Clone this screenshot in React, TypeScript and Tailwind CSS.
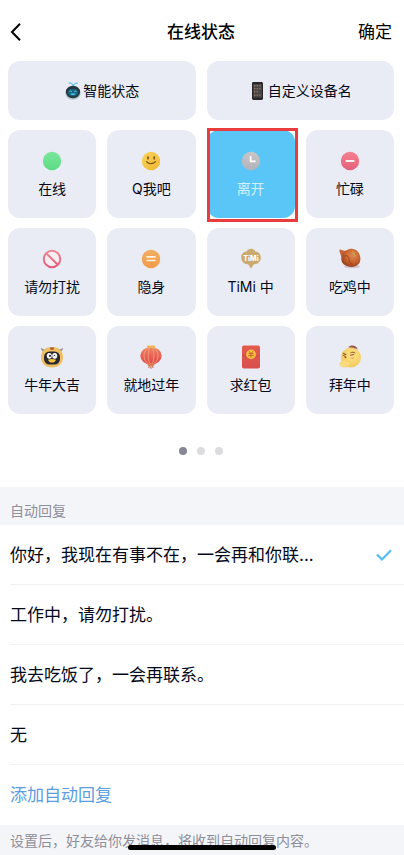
import { useState } from "react"
import type { ReactNode } from "react"

const OnlineIcon = () => (
  <svg width="24" height="24" viewBox="0 0 24 24" aria-hidden="true">
    <defs>
      <linearGradient id="online" x1="0" y1="0" x2="0" y2="1">
        <stop offset="0" stopColor="#7be69b" />
        <stop offset="1" stopColor="#5bdc84" />
      </linearGradient>
    </defs>
    <circle cx="12" cy="12" r="9.2" fill="url(#online)" />
  </svg>
)

const SmileIcon = () => (
  <svg width="24" height="24" viewBox="0 0 24 24" aria-hidden="true">
    <defs>
      <linearGradient id="smile" x1="0" y1="0" x2="1" y2="1">
        <stop offset="0" stopColor="#f9d45f" />
        <stop offset="1" stopColor="#f2b62f" />
      </linearGradient>
    </defs>
    <circle cx="12" cy="12" r="9.2" fill="url(#smile)" />
    <ellipse cx="9" cy="8.8" rx="0.9" ry="1.9" fill="#80571c" />
    <ellipse cx="15.2" cy="8.8" rx="0.9" ry="1.9" fill="#80571c" />
    <path d="M7.6 12.6c1.800 2.700 6.800 2.700 8.800 0" fill="none" stroke="#80571c" strokeWidth="1.200" strokeLinecap="round" />
  </svg>
)

const ClockIcon = () => (
  <svg width="24" height="24" viewBox="0 0 24 24" aria-hidden="true">
    <defs>
      <linearGradient id="clock" x1="0" y1="0" x2="0" y2="1">
        <stop offset="0" stopColor="#c9c5c6" />
        <stop offset="1" stopColor="#b1b3bb" />
      </linearGradient>
    </defs>
    <circle cx="12" cy="12" r="9.2" fill="url(#clock)" />
    <path d="M11.6 7v5.3h5" fill="none" stroke="#fff" strokeWidth="1.7" />
  </svg>
)

const BusyIcon = () => (
  <svg width="24" height="24" viewBox="0 0 24 24" aria-hidden="true">
    <defs>
      <linearGradient id="busy" x1="0" y1="0" x2="0" y2="1">
        <stop offset="0" stopColor="#f4818f" />
        <stop offset="1" stopColor="#e5617a" />
      </linearGradient>
    </defs>
    <circle cx="12" cy="12" r="9.2" fill="url(#busy)" />
    <path d="M7.6 12h8.8" stroke="#fff" strokeWidth="1.8" />
  </svg>
)

const BlockIcon = () => (
  <svg width="24" height="24" viewBox="0 0 24 24" aria-hidden="true">
    <defs>
      <linearGradient id="block" x1="0" y1="0" x2="0" y2="1">
        <stop offset="0" stopColor="#f08593" />
        <stop offset="1" stopColor="#e0607c" />
      </linearGradient>
    </defs>
    <g fill="none" stroke="url(#block)" strokeWidth="2">
      <circle cx="12" cy="12" r="8.2" fill="#f7eef4" />
      <path d="M6.2 6.2l11.6 11.6" />
    </g>
  </svg>
)

const HiddenIcon = () => (
  <svg width="24" height="24" viewBox="0 0 24 24" aria-hidden="true">
    <defs>
      <linearGradient id="hidden" x1="0" y1="0" x2="0" y2="1">
        <stop offset="0" stopColor="#f2ae62" />
        <stop offset="1" stopColor="#f39a48" />
      </linearGradient>
    </defs>
    <circle cx="12" cy="12" r="9.2" fill="url(#hidden)" />
    <path d="M7.4 9.9h9.2M7.4 13.5h9.2" stroke="#fff3e2" strokeWidth="1.7" />
  </svg>
)

const TimiIcon = () => (
  <svg width="24" height="24" viewBox="0 0 24 24" aria-hidden="true">
    <path
      d="M12 1.800c2 0 3.600 1 4.300 2.600 3 0 5.500 2.500 5.500 6.100 0 3.800-2.600 6.300-5.600 6.600-1.200.2-2.200 1-2.800 2.400L12 21.400l-1.400-1.900c-.6-1.400-1.600-2.200-2.800-2.400-3-.3-5.600-2.800-5.600-6.600 0-3.600 2.500-6.100 5.500-6.100C8.400 2.800 10 1.800 12 1.800z"
      fill="#cba970"
    />
    <text x="12" y="13.600" textAnchor="middle" fill="#fff" fontFamily="Inter, sans-serif" fontSize="7" fontWeight="800">
      TiMi
    </text>
  </svg>
)

const ChickenIcon = () => (
  <svg width="24" height="24" viewBox="0 0 24 24" aria-hidden="true">
    <defs>
      <radialGradient id="chicken" cx="0.6" cy="0.35" r="0.75">
        <stop offset="0" stopColor="#dd8a52" />
        <stop offset="0.5" stopColor="#c9642f" />
        <stop offset="1" stopColor="#8d3515" />
      </radialGradient>
    </defs>
    <ellipse cx="14" cy="19.4" rx="8" ry="1.8" fill="#cfc6d2" />
    <path d="M1.500 4.200c-.6-1.600 1.400-2.200 2.200-1.100 1.300.8 2.400.5 4 .6l1 4.300-3.800 3.400C3.200 9.800 2.200 7 1.500 4.200z" fill="#c5633a" />
    <path d="M8 3.600C12 .8 17 1.200 20 4.800c2.700 3.400 3.400 8.800.6 12.300-3 3.500-9.200 3.500-13 1.500-3.500-2-4.800-5-4.200-8.600C4 7.400 6 5 8 3.600z" fill="url(#chicken)" />
    <path d="M6.200 9.200c2.600-1.400 4.600.4 4.900 3.400.2 2.300 1.400 3.700 3.400 4.900" fill="none" stroke="#8f3a19" strokeWidth="0.800" />
    <path d="M14.500 4.500c1.800 1.200 2.600 3 2.600 5" fill="none" stroke="#c9a44a" strokeWidth="1.200" strokeLinecap="round" />
  </svg>
)

const OxIcon = () => (
  <svg width="24" height="24" viewBox="0 0 24 24" aria-hidden="true">
    <path d="M1 2.500c.1 3 1.500 4.200 4 4.500l2-2.500C4.500 5 2.500 4.300 1 2.500zM23 2.500c-.1 3-1.500 4.200-4 4.500l-2-2.500c2.500.5 4.500-.2 6-2z" fill="#8b8c94" />
    <path d="M12 2c7.200 0 11 4 11 10.300C23 19 18.400 22.500 12 22.500S1 19 1 12.300C1 6 4.800 2 12 2z" fill="#eebf62" />
    <path d="M9.800 2.500h4.400l-.9 2.200h-2.600z" fill="#a7562f" />
    <rect x="4" y="6.500" width="16" height="13" rx="5.500" fill="#2a2930" />
    <ellipse cx="9.300" cy="10.800" rx="2.500" ry="2.900" fill="#fff" />
    <ellipse cx="14.700" cy="10.800" rx="2.500" ry="2.900" fill="#fff" />
    <circle cx="9.900" cy="10.800" r="1.100" fill="#23222a" />
    <path d="M13.500 11.200c.4-1 1.600-1 2 0" fill="none" stroke="#23222a" strokeWidth="0.900" />
    <path d="M8 14.800c2.500-1.200 5.500-1.200 8 0-.8 2-2.200 2.800-4 2.800s-3.200-.8-4-2.800z" fill="#f5c23c" />
  </svg>
)

const LanternIcon = () => (
  <svg width="24" height="24" viewBox="0 0 24 24" aria-hidden="true">
    <defs>
      <linearGradient id="lantern" x1="0" y1="0" x2="0" y2="1">
        <stop offset="0" stopColor="#ef8a60" />
        <stop offset="0.5" stopColor="#ea6156" />
        <stop offset="1" stopColor="#df4a48" />
      </linearGradient>
    </defs>
    <path d="M12 20.500v3.200M10.400 20.500l-.6 2.600M13.600 20.500l.3 2.400" stroke="#c9593d" strokeWidth="1" />
    <ellipse cx="12" cy="10.800" rx="10.700" ry="8.800" fill="url(#lantern)" />
    <g fill="none" stroke="#f3a580" strokeWidth="0.800">
      <ellipse cx="12" cy="10.800" rx="7" ry="8.500" />
      <ellipse cx="12" cy="10.800" rx="2.800" ry="8.500" />
    </g>
    <rect x="8" y="0.500" width="8" height="2.600" rx="0.800" fill="#eeb659" />
    <rect x="8.600" y="18.600" width="6.800" height="2.200" rx="0.800" fill="#dd7444" />
  </svg>
)

const PacketIcon = () => (
  <svg width="24" height="24" viewBox="0 0 24 24" aria-hidden="true">
    <defs>
      <linearGradient id="packet" x1="0" y1="0" x2="0" y2="1">
        <stop offset="0" stopColor="#e45a4d" />
        <stop offset="1" stopColor="#d94f4e" />
      </linearGradient>
    </defs>
    <rect x="3" y="0.500" width="18" height="23" rx="1.800" fill="url(#packet)" />
    <path d="M3.500 9.500c5 4.700 12 4.700 17 0" fill="none" stroke="#cc4542" strokeWidth="0.800" />
    <circle cx="12" cy="9.400" r="4.900" fill="#f8bd42" />
    <path d="M10.200 6.400l1 1.300M13.800 6.400l-1 1.300M9.600 8.300h4.800M9.200 10.400h5.600M12 8v4.500" stroke="#ba602b" strokeWidth="0.900" />
  </svg>
)

const GreetIcon = () => (
  <svg width="24" height="24" viewBox="0 0 24 24" aria-hidden="true">
    <defs>
      <radialGradient id="greet" cx="0.55" cy="0.4" r="0.6">
        <stop offset="0" stopColor="#fde588" />
        <stop offset="1" stopColor="#f3ca5c" />
      </radialGradient>
    </defs>
    <circle cx="13" cy="12.500" r="10" fill="url(#greet)" />
    <path d="M10 2.300c3.500-3 8.400-1.800 9.800 2.200-3-1.600-6-2-9.800-2.200z" fill="#935844" />
    <path d="M5 8.200l3.200 1.300-3 1M12.800 7.700c1.400-.8 3-.7 4.200.2M12.400 10.200l3.400-.6" fill="none" stroke="#8a5530" strokeWidth="1" strokeLinecap="round" />
    <path d="M6 11.400c1.400-.7 2.900.2 2.600 1.300l-1.400.5z" fill="#b3422a" />
    <ellipse cx="14.300" cy="13" rx="2" ry="1" fill="#f6b56b" />
    <path d="M2 18.500c1-3 4-4 6.600-2.700 2.500-.4 4.300 1.500 3.400 3.700-1.200 2.500-5 3.300-7.800 2C2.600 20.800 1.700 19.800 2 18.500z" fill="#f9dc79" stroke="#edc563" strokeWidth="0.500" />
  </svg>
)

const RobotIcon = () => (
  <svg width="18" height="18" viewBox="0 0 18 18" aria-hidden="true">
    <path d="M9.200 4.500C9.400 2.500 7.500 1 5 .9M9.200 4.500c.3-2 1.800-3.100 4.200-3.300" fill="none" stroke="#6cc5ef" strokeWidth="1.300" strokeLinecap="round" />
    <ellipse cx="9" cy="10.900" rx="7.700" ry="6.900" fill="#b3c6c9" />
    <ellipse cx="9" cy="10" rx="7.100" ry="6.200" fill="#26353e" />
    <ellipse cx="9" cy="10.600" rx="5.400" ry="3.900" fill="#17637e" />
    <path d="M5.600 9.700c.5-1 1.600-1 2.100 0M10.300 9.700c.5-1 1.600-1 2.100 0" fill="none" stroke="#6fe0f5" strokeWidth="1" />
    <path d="M6.400 11.500h5.200c-.4 2-4.800 2-5.200 0z" fill="#52cbe8" />
  </svg>
)

const PhoneIcon = () => (
  <svg width="18" height="18" viewBox="0 0 18 18" aria-hidden="true">
    <rect x="3" y="0" width="11" height="18" rx="1.400" fill="#292728" />
    <rect x="4.200" y="2" width="8.600" height="13.600" fill="#4b4544" />
    <g fill="#8a7770">
      <rect x="5" y="3" width="1.400" height="1.400" />
      <rect x="7.600" y="3" width="1.400" height="1.400" />
      <rect x="10.300" y="3" width="1.400" height="1.400" />
      <rect x="5" y="6" width="1.400" height="1.400" />
      <rect x="7.600" y="6" width="1.400" height="1.400" />
      <rect x="10.300" y="6" width="1.400" height="1.400" />
      <rect x="5" y="9" width="1.400" height="1.400" />
      <rect x="7.600" y="9" width="1.400" height="1.400" />
      <rect x="5" y="12.500" width="1.400" height="1.400" />
      <rect x="7.600" y="12.500" width="1.400" height="1.400" />
      <rect x="10.300" y="12.500" width="1.400" height="1.400" />
    </g>
  </svg>
)

const statuses: { name: string; icon: ReactNode }[] = [
  { name: "在线", icon: <OnlineIcon /> },
  { name: "Q我吧", icon: <SmileIcon /> },
  { name: "离开", icon: <ClockIcon /> },
  { name: "忙碌", icon: <BusyIcon /> },
  { name: "请勿打扰", icon: <BlockIcon /> },
  { name: "隐身", icon: <HiddenIcon /> },
  { name: "TiMi 中", icon: <TimiIcon /> },
  { name: "吃鸡中", icon: <ChickenIcon /> },
  { name: "牛年大吉", icon: <OxIcon /> },
  { name: "就地过年", icon: <LanternIcon /> },
  { name: "求红包", icon: <PacketIcon /> },
  { name: "拜年中", icon: <GreetIcon /> },
]

const replies = [
  "你好，我现在有事不在，一会再和你联...",
  "工作中，请勿打扰。",
  "我去吃饭了，一会再联系。",
  "无",
]

function App() {
  const [status, setStatus] = useState("离开")
  const [reply, setReply] = useState(0)

  return (
    <div className="min-h-screen bg-white font-[Inter,'Noto_Sans_CJK_SC',sans-serif] text-[#03081a]">
      <header className="grid h-[61px] grid-cols-3 items-center pt-[3px] pr-3 pl-[10px] text-[17px] leading-6 text-black">
        <button type="button" aria-label="返回" className="justify-self-start">
          <svg width="12" height="20" viewBox="0 0 12 20" fill="none" stroke="currentColor" strokeWidth="2" aria-hidden="true">
            <path d="M10 1.800L2 10l8 8.200" />
          </svg>
        </button>
        <h1 className="text-center font-medium">在线状态</h1>
        <button type="button" className="justify-self-end">确定</button>
      </header>

      <main>
        <div className="pr-[10px] pl-2 text-[14px] leading-5">
          <div className="grid grid-cols-2 gap-[11px]">
            <button type="button" className="flex h-[59px] items-center justify-center gap-px rounded-xl bg-[#e9ecf4]">
              <RobotIcon />
              智能状态
            </button>
            <button type="button" className="flex h-[59px] items-center justify-center gap-px rounded-xl bg-[#e9ecf4]">
              <PhoneIcon />
              自定义设备名
            </button>
          </div>

          <div className="mt-[10px] grid grid-cols-4 gap-x-[11px] gap-y-[10px]">
            {statuses.map((item) => (
              <div key={item.name} className="relative">
                <button
                  type="button"
                  aria-pressed={status === item.name}
                  onClick={() => setStatus(item.name)}
                  className={
                    status === item.name
                      ? "flex h-[88px] w-full flex-col items-center justify-center gap-[6px] rounded-xl bg-[#5ac6f8] text-[#d3f0ff]"
                      : "flex h-[88px] w-full flex-col items-center justify-center gap-[6px] rounded-xl bg-[#e9ecf4]"
                  }
                >
                  {item.icon}
                  {item.name}
                </button>
                {status === item.name && (
                  <div className="pointer-events-none absolute -top-[2px] -right-[3px] -bottom-1 left-0 border-3 border-[#e93c3f]" />
                )}
              </div>
            ))}
          </div>

          <div className="flex h-[73px] items-center justify-center gap-[10px]">
            <span className="size-2 rounded-full bg-[#878795]" />
            <span className="size-2 rounded-full bg-[#dcdcdf]" />
            <span className="size-2 rounded-full bg-[#dcdcdf]" />
          </div>
        </div>

        <h2 className="flex h-[38px] items-end bg-[#f4f5f9] px-[10px] pb-1 text-[14px] leading-5 text-[#8d8f9b]">
          自动回复
        </h2>

        <div className="pl-[10px] text-[17px] leading-6">
          {replies.map((text, i) => (
            <label key={text} className="flex h-[60px] items-center justify-between border-b border-[#f1f1f4] pr-3">
              <input
                type="radio"
                name="reply"
                checked={reply === i}
                onChange={() => setReply(i)}
                className="sr-only"
              />
              <span>{text}</span>
              {reply === i && (
                <svg width="16" height="12" viewBox="0 0 16 12" fill="none" stroke="#56bff2" strokeWidth="2.200" aria-hidden="true">
                  <path d="M1 5.600l5 4.800L15 1.200" />
                </svg>
              )}
            </label>
          ))}
          <button type="button" className="flex h-[60px] w-full items-center text-[#5a9ee0]">
            添加自动回复
          </button>
        </div>

        <p className="bg-[#f4f5f9] px-[10px] pt-[6px] pb-1 text-[14px] leading-5 text-[#8d8f9b]">
          设置后，好友给你发消息，将收到自动回复内容。
        </p>
      </main>

      {/* home bar */}
      <div className="fixed inset-x-0 bottom-[5px] mx-auto h-[5px] w-[148px] rounded-full bg-black" />
    </div>
  )
}

export default App
